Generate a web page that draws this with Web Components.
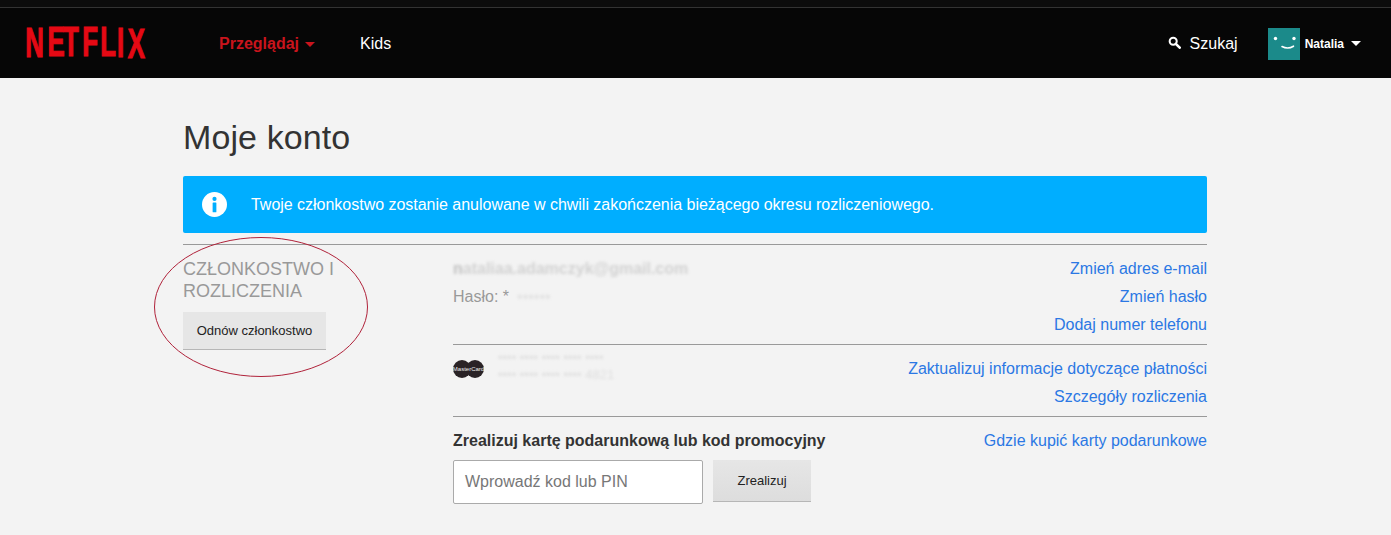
<!DOCTYPE html>
<html lang="pl">
<head>
<meta charset="utf-8">
<title>Moje konto</title>
<style>
  html, body { margin: 0; background: #f3f3f3; }
  body { font-family: "Liberation Sans", Arial, sans-serif; position: relative; height: 535px; overflow: hidden; }
</style>
</head>
<body>
<nf-header></nf-header>
<nf-page>
  <nf-alert>Twoje członkostwo zostanie anulowane w chwili zakończenia bieżącego okresu rozliczeniowego.</nf-alert>
  <nf-section heading="CZŁONKOSTWO I ROZLICZENIA">
    <nf-button slot="aside" style="width:143px;height:37px">Odnów członkostwo</nf-button>
    <nf-row link="Zmień adres e-mail"><nf-blur strong><span style="color:#aaa">n</span>ataliaa.adamczyk@gmail.com</nf-blur></nf-row>
    <nf-row link="Zmień hasło"><span style="color:#999">Hasło: *</span><nf-blur style="margin-left:8px;opacity:.45">••••••</nf-blur></nf-row>
    <nf-row link="Dodaj numer telefonu"></nf-row>
    <nf-divider></nf-divider>
    <nf-row link="Zaktualizuj informacje dotyczące płatności"><nf-card></nf-card><nf-blur style="margin:-6px 0 0 14px;font-size:13px;line-height:17px;opacity:.55">•••• •••• •••• •••• ••••<br>•••• •••• •••• •••• 4821</nf-blur></nf-row>
    <nf-row link="Szczegóły rozliczenia"></nf-row>
    <nf-divider></nf-divider>
    <nf-row link="Gdzie kupić karty podarunkowe"><b style="color:#333">Zrealizuj kartę podarunkową lub kod promocyjny</b></nf-row>
    <nf-redeem></nf-redeem>
  </nf-section>
</nf-page>
<nf-circle></nf-circle>

<script>
class NfHeader extends HTMLElement {
  connectedCallback() {
    this.attachShadow({ mode: 'open' });
    this.shadowRoot.innerHTML = `
      <style>
        :host { display: block; background: #060606; border-top: 7px solid #0c0c0c; }
        nav {
          display: flex;
          align-items: center;
          border-top: 1px solid #333;
          box-sizing: border-box;
          height: 71px;
          padding: 1px 30px 0 27px;
          color: #fff;
          font-size: 16px;
        }
        .logo { display: block; width: 120px; height: 34px; margin-right: 72px; overflow: visible; }
        .browse { color: #c9141c; font-weight: bold; display: flex; align-items: center; margin-right: 45px; }
        .caret { width: 0; height: 0; border: 5px solid transparent; border-top-color: currentColor; border-bottom: 0; margin-left: 6px; margin-top: 2px; }
        .spacer { flex: 1; }
        .search { display: flex; align-items: center; gap: 9px; margin-right: 30px; }
        .search svg { width: 13px; height: 13px; margin-top: -2px; }
        .avatar { width: 32px; height: 32px; margin-right: 5px; display: block; }
        .name { font-size: 12px; font-weight: bold; }
        .profile { display: flex; align-items: center; }
        .profile .caret { margin-top: 0; margin-left: 7px; }
      </style>
      <nav>
        <svg class="logo" viewBox="0 0 120 34" aria-label="Netflix">
          <text transform="scale(.6 1)" x="-3 34 60 92 122 150 168" y="30 29 29 29 29 30 31" font-family="Liberation Sans, sans-serif" font-weight="bold" font-size="43" fill="#e50914" stroke="#e50914" stroke-width="1.2">NETFLIX</text>
        </svg>
        <span class="browse">Przeglądaj<i class="caret"></i></span>
        <span>Kids</span>
        <span class="spacer"></span>
        <span class="search">
          <svg viewBox="0 0 14 14"><circle cx="5.6" cy="5.6" r="3.8" fill="none" stroke="#fff" stroke-width="2.2"/><path d="M8.4 8.4 12.6 12.6" stroke="#fff" stroke-width="2.8" stroke-linecap="round"/></svg>
          Szukaj
        </span>
        <span class="profile">
          <svg class="avatar" viewBox="0 0 32 32">
            <rect width="32" height="32" fill="#1b8a8a"/>
            <circle cx="7.5" cy="10.5" r="1.7" fill="#fff"/>
            <circle cx="26" cy="10.5" r="1.7" fill="#fff"/>
            <path d="M14 18.5c3.5 1.8 8 1.8 11.5-.3" fill="none" stroke="#fff" stroke-width="1.6" stroke-linecap="round"/>
          </svg>
          <span class="name">Natalia</span><i class="caret"></i>
        </span>
      </nav>
    `;
  }
}

class NfPage extends HTMLElement {
  connectedCallback() {
    this.attachShadow({ mode: 'open' });
    this.shadowRoot.innerHTML = `
      <style>
        :host { display: block; width: 1024px; margin-left: 183px; color: #333; }
        h1 { margin: 0; padding-top: 37px; height: 61px; font-size: 34px; line-height: 44px; font-weight: normal; letter-spacing: .1px; }
      </style>
      <h1>Moje konto</h1>
      <slot></slot>
    `;
  }
}

class NfAlert extends HTMLElement {
  connectedCallback() {
    this.attachShadow({ mode: 'open' });
    this.shadowRoot.innerHTML = `
      <style>
        :host {
          display: flex;
          align-items: center;
          height: 57px;
          padding-left: 19px;
          gap: 24px;
          background: #00aeff;
          border-radius: 2px;
          color: #fff;
          font-size: 16px;
          letter-spacing: -.02px;
        }
        svg { width: 25px; height: 25px; display: block; margin-top: -1px; }
      </style>
      <svg viewBox="0 0 24 24">
        <circle cx="12" cy="12" r="12" fill="#fff"/>
        <circle cx="12" cy="6.6" r="2" fill="#00aeff"/>
        <rect x="10.2" y="10" width="3.6" height="9.5" rx=".6" fill="#00aeff"/>
      </svg>
      <slot></slot>
    `;
  }
}

class NfSection extends HTMLElement {
  connectedCallback() {
    this.attachShadow({ mode: 'open' });
    this.shadowRoot.innerHTML = `
      <style>
        :host {
          display: grid;
          grid-template-columns: 270px 1fr;
          margin-top: 11px;
          border-top: 1px solid #999;
          padding-top: 9px;
        }
        h2 { margin: 4px 0 10px; font-size: 18px; line-height: 22px; font-weight: normal; color: #999; width: 170px; }
      </style>
      <aside>
        <h2></h2>
        <slot name="aside"></slot>
      </aside>
      <div class="main"><slot></slot></div>
    `;
    this.shadowRoot.querySelector('h2').textContent = this.getAttribute('heading');
  }
}

class NfRow extends HTMLElement {
  connectedCallback() {
    this.attachShadow({ mode: 'open' });
    this.shadowRoot.innerHTML = `
      <style>
        :host {
          display: flex;
          align-items: center;
          justify-content: space-between;
          box-sizing: border-box;
          height: 28px;
          padding-top: 2px;
          font-size: 16px;
        }
        .left { display: flex; align-items: center; }
        a { color: #2b78e4; text-decoration: none; }
      </style>
      <div class="left"><slot></slot></div>
      <a href="#"></a>
    `;
    this.shadowRoot.querySelector('a').textContent = this.getAttribute('link');
  }
}

class NfBlur extends HTMLElement {
  connectedCallback() {
    this.attachShadow({ mode: 'open' });
    this.shadowRoot.innerHTML = `
      <style>
        :host { display: inline-block; color: #ccc; filter: blur(1.8px); opacity: .7; }
        :host([strong]) { color: #c4c4c4; font-weight: bold; }
      </style>
      <slot></slot>
    `;
  }
}

class NfDivider extends HTMLElement {
  connectedCallback() {
    this.attachShadow({ mode: 'open' });
    this.shadowRoot.innerHTML = `
      <style>
        :host { display: block; margin: 6px 0 9px; border-top: 1px solid #999; }
      </style>
    `;
  }
}

class NfCard extends HTMLElement {
  connectedCallback() {
    this.attachShadow({ mode: 'open' });
    this.shadowRoot.innerHTML = `
      <style>
        :host { display: block; width: 31px; height: 18px; }
        svg { display: block; }
      </style>
      <svg width="31" height="18" viewBox="0 0 31 18">
        <circle cx="9" cy="9" r="9" fill="#2a2326"/>
        <circle cx="22" cy="9" r="9" fill="#2a2326"/>
        <text x="15.5" y="11" text-anchor="middle" font-family="Liberation Sans, sans-serif" font-size="6" fill="#eee">MasterCard</text>
      </svg>
    `;
  }
}

class NfButton extends HTMLElement {
  connectedCallback() {
    this.attachShadow({ mode: 'open' });
    this.shadowRoot.innerHTML = `
      <style>
        :host {
          display: flex;
          align-items: center;
          justify-content: center;
          box-sizing: border-box;
          background: #e6e6e6;
          box-shadow: 0 1px 0 rgba(0,0,0,.25);
          color: #222;
          font-size: 13px;
        }
      </style>
      <slot></slot>
    `;
  }
}

class NfRedeem extends HTMLElement {
  connectedCallback() {
    this.attachShadow({ mode: 'open' });
    this.shadowRoot.innerHTML = `
      <style>
        :host { display: flex; align-items: flex-start; gap: 10px; margin-top: 6px; }
        .field {
          box-sizing: border-box;
          width: 250px;
          height: 44px;
          padding-left: 11px;
          display: flex;
          align-items: center;
          background: #fff;
          border: 1px solid #aaa;
          border-radius: 2px;
          color: #777;
          font-size: 16px;
        }
        nf-button { width: 98px; height: 41px; background: linear-gradient(#e6e6e6, #dddddd); }
      </style>
      <div class="field">Wprowadź kod lub PIN</div>
      <nf-button>Zrealizuj</nf-button>
    `;
  }
}

class NfCircle extends HTMLElement {
  connectedCallback() {
    this.attachShadow({ mode: 'open' });
    this.shadowRoot.innerHTML = `
      <style>
        :host { position: absolute; left: 153px; top: 236px; width: 216px; height: 142px; pointer-events: none; }
        svg { display: block; }
      </style>
      <svg width="216" height="142" viewBox="0 0 216 142">
        <ellipse cx="108" cy="71" rx="106.5" ry="69.5" fill="none" stroke="#b0223a" stroke-width="1"/>
      </svg>
    `;
  }
}

customElements.define('nf-header', NfHeader);
customElements.define('nf-page', NfPage);
customElements.define('nf-alert', NfAlert);
customElements.define('nf-section', NfSection);
customElements.define('nf-row', NfRow);
customElements.define('nf-blur', NfBlur);
customElements.define('nf-divider', NfDivider);
customElements.define('nf-card', NfCard);
customElements.define('nf-button', NfButton);
customElements.define('nf-redeem', NfRedeem);
customElements.define('nf-circle', NfCircle);
</script>
</body>
</html>
